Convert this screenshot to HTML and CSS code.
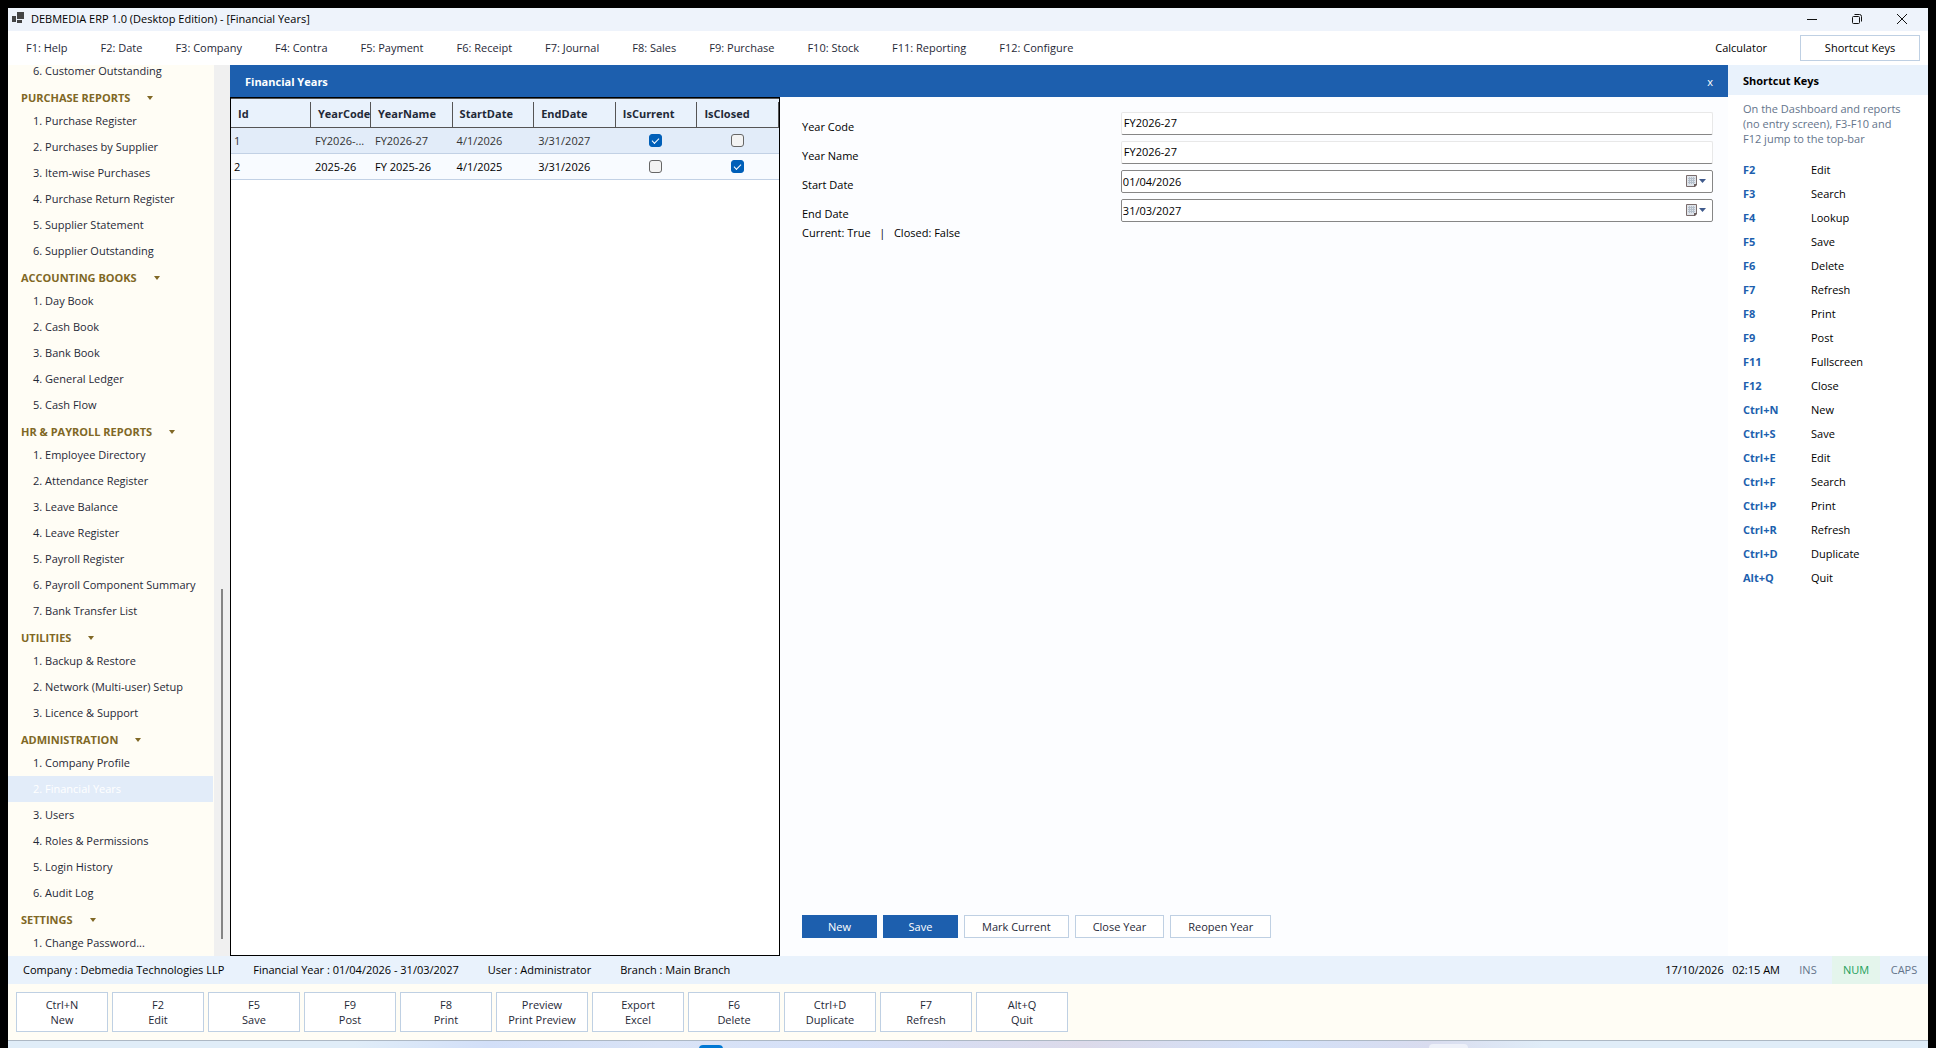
FILE: index.html
```html
<!DOCTYPE html>
<html lang="en">
<head>
<meta charset="utf-8">
<title>DEBMEDIA ERP 1.0 (Desktop Edition) - [Financial Years]</title>
<link rel="stylesheet" href="styles.css">
</head>
<body>
<div class="window">
  <header class="titlebar">
    <svg class="app-icon" width="13" height="13" viewBox="0 0 13 13"><path fill="#444" d="M0 4h4v6H0zM5 0h7v7H5zM5 8h5v3H5z"/></svg>
    <h1 class="app-title">DEBMEDIA ERP 1.0 (Desktop Edition) - [Financial Years]</h1>
    <button class="win-btn" aria-label="Minimize"><svg width="12" height="12" viewBox="0 0 12 12"><path d="M1 6.5h10"/></svg></button>
    <button class="win-btn" aria-label="Restore"><svg width="12" height="12" viewBox="0 0 12 12"><rect x="1.5" y="3.5" width="7" height="7" rx="1"/><path d="M3.5 1.5h5a2 2 0 0 1 2 2v5"/></svg></button>
    <button class="win-btn" aria-label="Close"><svg width="12" height="12" viewBox="0 0 12 12"><path d="M1 1l10 10M11 1L1 11"/></svg></button>
  </header>

  <nav class="menubar">
    <button>F1: Help</button>
    <button>F2: Date</button>
    <button>F3: Company</button>
    <button>F4: Contra</button>
    <button>F5: Payment</button>
    <button>F6: Receipt</button>
    <button>F7: Journal</button>
    <button>F8: Sales</button>
    <button>F9: Purchase</button>
    <button>F10: Stock</button>
    <button>F11: Reporting</button>
    <button>F12: Configure</button>
    <button class="calculator">Calculator</button>
    <button class="outlined keys-toggle">Shortcut Keys</button>
  </nav>

  <div class="workspace">
    <aside class="sidebar">
      <div class="tree">
        <a href="#">6. Customer Outstanding</a>
        <h2>PURCHASE REPORTS</h2>
        <a href="#">1. Purchase Register</a>
        <a href="#">2. Purchases by Supplier</a>
        <a href="#">3. Item-wise Purchases</a>
        <a href="#">4. Purchase Return Register</a>
        <a href="#">5. Supplier Statement</a>
        <a href="#">6. Supplier Outstanding</a>
        <h2>ACCOUNTING BOOKS</h2>
        <a href="#">1. Day Book</a>
        <a href="#">2. Cash Book</a>
        <a href="#">3. Bank Book</a>
        <a href="#">4. General Ledger</a>
        <a href="#">5. Cash Flow</a>
        <h2>HR &amp; PAYROLL REPORTS</h2>
        <a href="#">1. Employee Directory</a>
        <a href="#">2. Attendance Register</a>
        <a href="#">3. Leave Balance</a>
        <a href="#">4. Leave Register</a>
        <a href="#">5. Payroll Register</a>
        <a href="#">6. Payroll Component Summary</a>
        <a href="#">7. Bank Transfer List</a>
        <h2>UTILITIES</h2>
        <a href="#">1. Backup &amp; Restore</a>
        <a href="#">2. Network (Multi-user) Setup</a>
        <a href="#">3. Licence &amp; Support</a>
        <h2>ADMINISTRATION</h2>
        <a href="#">1. Company Profile</a>
        <a href="#" class="selected">2. Financial Years</a>
        <a href="#">3. Users</a>
        <a href="#">4. Roles &amp; Permissions</a>
        <a href="#">5. Login History</a>
        <a href="#">6. Audit Log</a>
        <h2>SETTINGS</h2>
        <a href="#">1. Change Password...</a>
      </div>
      <div class="scrollbar"><div class="thumb"></div></div>
    </aside>

    <main class="document">
      <div class="doc-header">
        <h2>Financial Years</h2>
        <button aria-label="Close tab">x</button>
      </div>
      <div class="doc-body">
        <div class="grid-pane">
          <table class="grid">
            <colgroup><col class="c-id"><col class="c-code"><col class="c-mid"><col class="c-mid"><col class="c-mid"><col class="c-mid"><col class="c-mid"></colgroup>
            <thead>
              <tr><th>Id</th><th>YearCode</th><th>YearName</th><th>StartDate</th><th>EndDate</th><th>IsCurrent</th><th>IsClosed</th></tr>
            </thead>
            <tbody>
              <tr class="current"><td>1</td><td>FY2026-...</td><td>FY2026-27</td><td>4/1/2026</td><td>3/31/2027</td><td class="check"><input type="checkbox" aria-label="Year 1 is current" checked></td><td class="check"><input type="checkbox" aria-label="Year 1 is closed"></td></tr>
              <tr><td>2</td><td>2025-26</td><td>FY 2025-26</td><td>4/1/2025</td><td>3/31/2026</td><td class="check"><input type="checkbox" aria-label="Year 2 is current"></td><td class="check"><input type="checkbox" aria-label="Year 2 is closed" checked></td></tr>
            </tbody>
          </table>
        </div>
        <form class="editor">
          <div class="field"><label for="code">Year Code</label><input class="text" id="code" type="text" value="FY2026-27"></div>
          <div class="field"><label for="name">Year Name</label><input class="text" id="name" type="text" value="FY2026-27"></div>
          <div class="field"><label for="start">Start Date</label>
            <div class="date"><input id="start" type="text" value="01/04/2026">
              <button type="button" aria-label="Pick start date"><svg width="22" height="15" viewBox="0 0 22 15"><path fill="#dfe4ea" stroke="#7a6c6c" d="M1.500 1.500h10v9l-2 2h-8z"/><path stroke="#b4bfcb" fill="none" d="M3 4.500h7M3 6.500h7M3 8.500h7M4.500 3v7M6.500 3v7M8.500 3v7"/><path fill="#6b5f5f" d="M12 10v1l-2 2H9v-3z"/><path fill="#3f5a8c" d="M14 5h7l-3.500 4z"/></svg></button></div></div>
          <div class="field"><label for="end">End Date</label>
            <div class="date"><input id="end" type="text" value="31/03/2027">
              <button type="button" aria-label="Pick end date"><svg width="22" height="15" viewBox="0 0 22 15"><path fill="#dfe4ea" stroke="#7a6c6c" d="M1.500 1.500h10v9l-2 2h-8z"/><path stroke="#b4bfcb" fill="none" d="M3 4.500h7M3 6.500h7M3 8.500h7M4.500 3v7M6.500 3v7M8.500 3v7"/><path fill="#6b5f5f" d="M12 10v1l-2 2H9v-3z"/><path fill="#3f5a8c" d="M14 5h7l-3.500 4z"/></svg></button></div></div>
          <p class="flags">Current: True &nbsp; | &nbsp; Closed: False</p>
          <div class="actions">
            <button type="button" class="primary">New</button>
            <button type="button" class="primary">Save</button>
            <button type="button" class="outlined">Mark Current</button>
            <button type="button" class="outlined">Close Year</button>
            <button type="button" class="outlined">Reopen Year</button>
          </div>
        </form>
      </div>
    </main>

    <aside class="shortcuts">
      <h2>Shortcut Keys</h2>
      <p>On the Dashboard and reports<br>(no entry screen), F3-F10 and<br>F12 jump to the top-bar</p>
      <dl>
        <dt>F2</dt><dd>Edit</dd>
        <dt>F3</dt><dd>Search</dd>
        <dt>F4</dt><dd>Lookup</dd>
        <dt>F5</dt><dd>Save</dd>
        <dt>F6</dt><dd>Delete</dd>
        <dt>F7</dt><dd>Refresh</dd>
        <dt>F8</dt><dd>Print</dd>
        <dt>F9</dt><dd>Post</dd>
        <dt>F11</dt><dd>Fullscreen</dd>
        <dt>F12</dt><dd>Close</dd>
        <dt>Ctrl+N</dt><dd>New</dd>
        <dt>Ctrl+S</dt><dd>Save</dd>
        <dt>Ctrl+E</dt><dd>Edit</dd>
        <dt>Ctrl+F</dt><dd>Search</dd>
        <dt>Ctrl+P</dt><dd>Print</dd>
        <dt>Ctrl+R</dt><dd>Refresh</dd>
        <dt>Ctrl+D</dt><dd>Duplicate</dd>
        <dt>Alt+Q</dt><dd>Quit</dd>
      </dl>
    </aside>
  </div>

  <div class="statusbar">
    <div class="context">
      <span>Company : Debmedia Technologies LLP</span>
      <span>Financial Year : 01/04/2026 - 31/03/2027</span>
      <span>User : Administrator</span>
      <span>Branch : Main Branch</span>
    </div>
    <span class="clock">17/10/2026 &nbsp; 02:15 AM</span>
    <span class="lock">INS</span>
    <span class="lock on">NUM</span>
    <span class="lock">CAPS</span>
  </div>

  <div class="commands">
    <button class="outlined">Ctrl+N<br>New</button>
    <button class="outlined">F2<br>Edit</button>
    <button class="outlined">F5<br>Save</button>
    <button class="outlined">F9<br>Post</button>
    <button class="outlined">F8<br>Print</button>
    <button class="outlined">Preview<br>Print Preview</button>
    <button class="outlined">Export<br>Excel</button>
    <button class="outlined">F6<br>Delete</button>
    <button class="outlined">Ctrl+D<br>Duplicate</button>
    <button class="outlined">F7<br>Refresh</button>
    <button class="outlined">Alt+Q<br>Quit</button>
  </div>
  <div class="taskbar"><i class="task-active"></i><i class="task-chip"></i></div>
</div>
</body>
</html>
```
FILE: styles.css
```css
* { box-sizing: border-box; }

body {
  margin: 0;
  background: #000;
  color: #000;
  font: 11px/16px "Open Sans", "Noto Sans", sans-serif;
}

h1, h2, p, dl, dd { margin: 0; font-size: inherit; }

button, input { font: inherit; color: inherit; }

button {
  padding: 0;
  border: 0;
  background: none;
}

a { color: inherit; text-decoration: none; }

.outlined {
  border: 1px solid #bfd0e3;
  background: #fff;
}

.window {
  display: flex;
  flex-direction: column;
  height: 100vh;
  padding: 8px 8px 0;
}

.titlebar {
  display: flex;
  align-items: center;
  height: 23px;
  padding: 0 4px 2px;
  background: #eef3fb;
}

.app-title {
  flex: 1;
  margin-left: 6px;
  font-weight: 400;
}

.win-btn {
  display: grid;
  place-items: center;
  width: 45px;
  height: 20px;
}

.win-btn svg { fill: none; stroke: #111; }

.menubar {
  display: flex;
  align-items: center;
  gap: 33px;
  height: 34px;
  padding: 0 8px 0 18px;
  background: #fff;
  color: #1f2937;
}

.calculator { margin-left: auto; color: #000; }

.keys-toggle {
  width: 120px;
  height: 26px;
  color: #000;
}

.workspace {
  display: flex;
  flex: 1;
  min-height: 0;
}

.sidebar {
  display: flex;
  width: 222px;
  background: #fffdf5;
}

.tree {
  display: flex;
  flex: 1;
  flex-direction: column;
  justify-content: flex-end;
  overflow: hidden;
  color: #1f2937;
}

.tree a {
  flex: none;
  height: 26px;
  margin-right: 1px;
  padding-left: 25px;
  line-height: 26px;
  white-space: nowrap;
}

.tree .selected {
  background: #e2ecf9;
  color: #fff;
}

.tree h2 {
  display: flex;
  flex: none;
  align-items: center;
  gap: 17px;
  height: 24px;
  padding: 3px 0 0 13px;
  color: #806825;
}

.tree h2::after {
  content: "";
  border: 3px solid transparent;
  border-top: 4px solid #806825;
  border-bottom: 0;
}

.scrollbar {
  display: flex;
  flex-direction: column;
  justify-content: flex-end;
  align-items: center;
  width: 16px;
  padding-bottom: 17px;
  background: #f0f0f0;
}

.thumb {
  width: 2px;
  height: 40%;
  background: #858585;
}

.document {
  display: flex;
  flex: 1;
  flex-direction: column;
}

.doc-header {
  display: flex;
  align-items: center;
  justify-content: space-between;
  height: 32px;
  padding: 2px 15px 0;
  background: #1d5fae;
  color: #fff;
}

.doc-body {
  display: flex;
  flex: 1;
}

.grid-pane {
  width: 550px;
  border: 1px solid #000;
  background: #fff;
}

.grid {
  width: 100%;
  border-collapse: separate;
  border-spacing: 0;
  table-layout: fixed;
}

.c-id { width: 80px; }
.c-code { width: 60px; }

.grid th {
  height: 30px;
  padding: 2px 0 0 7px;
  border-top: 1px solid #555;
  border-bottom: 1px solid #555;
  background: linear-gradient(#555, #555) right bottom / 1px 25px no-repeat #e9f2fc;
  color: #1f2937;
  text-align: left;
  white-space: nowrap;
}

.grid td {
  height: 26px;
  padding: 0 0 0 4px;
  border-bottom: 1px solid #c2d1e5;
  background: #f8fbff;
  white-space: nowrap;
}

.grid td:first-child { padding-left: 3px; }

.grid .current td { background: #e2ecf9; color: #333; }

.grid td.check { padding: 0 2px 0 0; text-align: center; }

.check input {
  display: block;
  width: 13px;
  height: 13px;
  margin: 0 auto;
  border: 1px solid #666;
  border-radius: 3px;
  background: #f3f3f3;
  appearance: none;
}

.check input:checked {
  border-color: #005fb8;
  background: #005fb8;
}

.check input:checked::before {
  content: "";
  display: block;
  width: 6px;
  height: 3px;
  margin: 3px auto 0;
  border: solid #fff;
  border-width: 0 0 1px 1px;
  transform: rotate(-45deg);
}

.editor {
  display: flex;
  flex: 1;
  flex-direction: column;
  padding: 12px 15px 18px 22px;
  background: #fcfdff;
}

.field {
  display: grid;
  grid-template-columns: 35% 1fr;
  align-items: center;
  height: 29px;
}

.field label { padding-top: 7px; }

.field input {
  min-width: 0;
  height: 23px;
  padding: 0 2px 2px;
  border: 1px solid #e8e8e8;
  border-bottom-color: #868686;
  border-radius: 2px;
  background: #fff;
}

.date {
  display: flex;
  height: 23px;
  padding-right: 5px;
  border: 1px solid #868686;
  border-radius: 2px;
  background: #fff;
}

.date input {
  flex: 1;
  height: 21px;
  padding: 0 1px;
  border: 0;
}

.date button { display: grid; place-items: center; }

.actions {
  display: flex;
  gap: 6px;
  margin-top: auto;
}

.actions button {
  height: 23px;
  padding: 0 17px;
}

.actions .outlined { color: #1f2937; }

.actions .primary {
  width: 75px;
  background: #1d5fae;
  color: #fff;
}

.shortcuts {
  width: 200px;
  background: #fff;
}

.shortcuts h2 {
  height: 30px;
  padding-left: 15px;
  background: #e9f2fc;
  line-height: 32px;
}

.shortcuts p {
  padding: 6px 0 0 15px;
  color: #64748b;
  line-height: 15px;
}

.shortcuts dl {
  display: grid;
  grid-template-columns: 68px 1fr;
  padding: 12px 0 0 15px;
  line-height: 24px;
}

.shortcuts dt { color: #1d5fae; font-weight: 700; }

.statusbar {
  display: flex;
  align-items: center;
  height: 28px;
  padding-left: 15px;
  background: #e9f2fc;
}

.context {
  display: flex;
  flex: 1;
  gap: 29px;
}

.clock { padding-right: 4px; }

.lock {
  width: 48px;
  color: #64748b;
  line-height: 28px;
  text-align: center;
}

.lock.on { background: #e4f5ec; color: #22a05a; }

.commands {
  display: flex;
  gap: 4px;
  height: 57px;
  padding: 8px;
  border-bottom: 1px solid #adb8c4;
  background: #fffdf5;
}

.commands .outlined {
  width: 92px;
  height: 40px;
  color: #1f2937;
  line-height: 15px;
}

.taskbar {
  position: relative;
  height: 7px;
  overflow: hidden;
  background: linear-gradient(90deg, #e0edf8 18%, #d2dff8 25%, #d9e3f6 34%, #d5e0f8 44%, #dcdaea 56%, #d3e1f8 66%, #d9dcef 74%, #e0edf8 80%);
}

.task-active, .task-chip {
  position: absolute;
  height: 24px;
}

.task-active {
  top: 4px;
  left: 36%;
  width: 24px;
  border-radius: 4px;
  background: #0078d4;
}

.task-chip {
  top: 3px;
  left: 74%;
  width: 39px;
  border-radius: 4px;
  background: #eef1f9;
}
```
